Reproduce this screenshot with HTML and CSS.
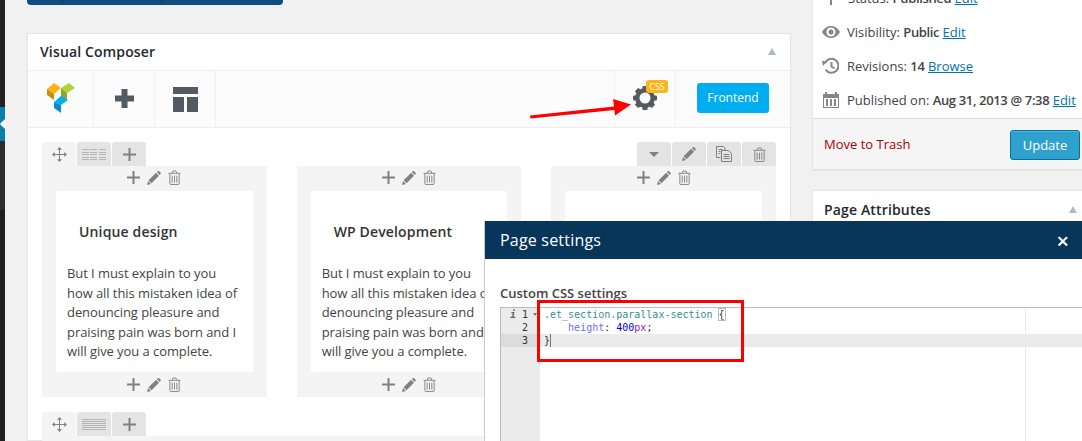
FILE: index.html
```html
<!DOCTYPE html>
<html lang="en">
<head>
<meta charset="utf-8">
<title>Visual Composer</title>
<link rel="stylesheet" href="styles.css">
</head>
<body>
<svg class="defs" width="0" height="0">
  <defs>
    <symbol id="i-plus" viewBox="0 0 13 13"><path d="M5.500 0h2v5.500H13v2H7.500V13h-2V7.500H0v-2h5.500z"/></symbol>
    <symbol id="i-pencil" viewBox="0 0 15 15"><path d="M10.600 1.200 11.900.1q.6-.3 1.100.1l1.600 1.600q.5.6 0 1.200l-1.100 1.300zM9.800 2l3 3-7.900 8-3.200-3zM1.200 10.800l3 3L0 15z"/></symbol>
    <symbol id="i-trash" viewBox="0 0 14 16"><path fill="none" stroke="currentColor" d="M2 4v10.500q0 1 1 1h8q1 0 1-1V4M.5 3.500h13M4.500 3.200 5.500 1h3l1 2.200M4.500 6v7.500M7 6v7.500M9.500 6v7.500"/></symbol>
    <symbol id="i-copy" viewBox="0 0 16 16"><path fill="none" stroke="currentColor" d="M4.500 11.500H.5V.5h7L9 2v2.500M2.500 3.500h4M2.500 5.500h2M2.500 7.500h2M5.500 4.500h7l3 3v8h-10zM7.500 8.500h6M7.500 10.500h6M7.500 12.500h6"/></symbol>
    <symbol id="i-move" viewBox="0 0 15 15"><path d="M7.500 0 10 2.700H8V7h4.300V5L15 7.500 12.300 10V8H8v4.300h2L7.500 15 5 12.300h2V8H2.700v2L0 7.500 2.700 5v2H7V2.700H5z"/></symbol>
  </defs>
</svg>

<div class="page">
  <aside class="adminbar"><div class="collapse"><span class="chev"></span></div></aside>

  <main class="main">
    <div class="topbar">
      <span class="topbar-seg topbar-a"></span><span class="topbar-seg topbar-b"></span><span class="topbar-seg topbar-c"></span>
    </div>

    <section class="box vc">
      <header class="box-head">
        <h2 class="box-title">Visual Composer</h2>
        <span class="fold"></span>
      </header>

      <nav class="vc-nav">
        <div class="nav-cell nav-logo">
          <svg class="logo" width="28" height="30" viewBox="0 0 28 30">
            <path fill="#fdb515" d="M0 6 7 0l7 5-7 6z"/>
            <path fill="#c98f0c" d="M0 6l7 5v6l-7-5z"/>
            <path fill="#b0d237" d="M14 5l8-5 6 5-8 5z"/>
            <path fill="#8aa62d" d="M14 5l6 5v6l-6 4z"/>
            <path fill="#00aeef" d="M7 19l7-6 7 4-7 5z"/>
            <path fill="#0a8cc4" d="M7 19l7 3v8l-7-5z"/>
          </svg>
        </div>
        <div class="nav-cell">
          <svg class="nav-plus" width="19" height="19" viewBox="0 0 19 19"><path d="M6.500 0h6v6.500H19v6h-6.500V19h-6v-6.500H0v-6h6.500z"/></svg>
        </div>
        <div class="nav-cell">
          <svg class="nav-layout" width="25" height="25" viewBox="0 0 25 25"><path d="M0 0h25v7H0zM0 10h11v15H0zM14 10h11v15H14z"/></svg>
        </div>
        <div class="nav-right">
          <div class="nav-cell nav-gear">
            <svg class="gear" width="24" height="24" viewBox="-12 -12 24 24">
              <circle r="7.700" fill="none" stroke="currentColor" stroke-width="4.400"/>
              <g>
                <rect x="-2.600" y="-12" width="5.200" height="4" rx="1"/>
                <rect x="-2.600" y="-12" width="5.200" height="4" rx="1" transform="rotate(45)"/>
                <rect x="-2.600" y="-12" width="5.200" height="4" rx="1" transform="rotate(90)"/>
                <rect x="-2.600" y="-12" width="5.200" height="4" rx="1" transform="rotate(135)"/>
                <rect x="-2.600" y="-12" width="5.200" height="4" rx="1" transform="rotate(180)"/>
                <rect x="-2.600" y="-12" width="5.200" height="4" rx="1" transform="rotate(225)"/>
                <rect x="-2.600" y="-12" width="5.200" height="4" rx="1" transform="rotate(270)"/>
                <rect x="-2.600" y="-12" width="5.200" height="4" rx="1" transform="rotate(315)"/>
              </g>
            </svg>
            <span class="badge">CSS</span>
          </div>
          <div class="nav-btn-wrap"><span class="frontend">Frontend</span></div>
        </div>
      </nav>

      <div class="vc-canvas">
        <div class="row-head">
          <div class="tabs">
            <span class="tab tab-move"><svg class="ic-move"><use href="#i-move"/></svg></span>
            <span class="tab"><span class="lines lines-cols"></span></span>
            <span class="tab"><svg class="ic-plus"><use href="#i-plus"/></svg></span>
          </div>
          <div class="tabs">
            <span class="tab"><span class="caret"></span></span>
            <span class="tab"><svg class="ic-pencil"><use href="#i-pencil"/></svg></span>
            <span class="tab"><svg class="ic-copy"><use href="#i-copy"/></svg></span>
            <span class="tab"><svg class="ic-trash"><use href="#i-trash"/></svg></span>
          </div>
        </div>

        <div class="columns">
          <article class="column">
            <div class="col-tools col-tools-top"><svg class="ic-plus"><use href="#i-plus"/></svg><svg class="ic-pencil"><use href="#i-pencil"/></svg><svg class="ic-trash"><use href="#i-trash"/></svg></div>
            <div class="card">
              <h3 class="card-title">Unique design</h3>
              <p class="card-text">But I must explain to you how all this mistaken idea of denouncing pleasure and praising pain was born and I will give you a complete.</p>
            </div>
            <div class="col-tools"><svg class="ic-plus"><use href="#i-plus"/></svg><svg class="ic-pencil"><use href="#i-pencil"/></svg><svg class="ic-trash"><use href="#i-trash"/></svg></div>
          </article>
          <article class="column">
            <div class="col-tools col-tools-top"><svg class="ic-plus"><use href="#i-plus"/></svg><svg class="ic-pencil"><use href="#i-pencil"/></svg><svg class="ic-trash"><use href="#i-trash"/></svg></div>
            <div class="card">
              <h3 class="card-title">WP Development</h3>
              <p class="card-text">But I must explain to you how all this mistaken idea of denouncing pleasure and praising pain was born and I will give you a complete.</p>
            </div>
            <div class="col-tools"><svg class="ic-plus"><use href="#i-plus"/></svg><svg class="ic-pencil"><use href="#i-pencil"/></svg><svg class="ic-trash"><use href="#i-trash"/></svg></div>
          </article>
          <article class="column">
            <div class="col-tools col-tools-top"><svg class="ic-plus"><use href="#i-plus"/></svg><svg class="ic-pencil"><use href="#i-pencil"/></svg><svg class="ic-trash"><use href="#i-trash"/></svg></div>
            <div class="card"></div>
            <div class="col-tools"></div>
          </article>
        </div>

        <div class="row-head row-head-2">
          <div class="tabs">
            <span class="tab tab-move"><svg class="ic-move"><use href="#i-move"/></svg></span>
            <span class="tab"><span class="lines"></span></span>
            <span class="tab"><svg class="ic-plus"><use href="#i-plus"/></svg></span>
          </div>
        </div>
        <div class="row-2-body"></div>
      </div>
    </section>
  </main>

  <aside class="side">
    <section class="box publish">
      <div class="pub-row pub-status"><svg class="pub-icon pub-pin" width="16" height="22" viewBox="0 0 16 22"><path fill="#82878c" d="M7 0h2v18H7z"/></svg><span>Status: <b>Published</b> <a>Edit</a></span></div>
      <div class="pub-row"><svg class="pub-icon" width="18" height="12" viewBox="0 0 18 12"><path fill="#82878c" fill-rule="evenodd" d="M9 0c4 0 7 2.500 9 6-2 3.500-5 6-9 6s-7-2.500-9-6c2-3.500 5-6 9-6zM9 1.500a4.500 4.500 0 1 0 0 9 4.500 4.500 0 0 0 0-9zM9 3.500a2.500 2.500 0 1 1 0 5 2.500 2.500 0 0 1 0-5z"/></svg><span>Visibility: <b>Public</b> <a>Edit</a></span></div>
      <div class="pub-row"><svg class="pub-icon pub-rev" width="17" height="16" viewBox="0 0 17 16"><path fill="none" stroke="#82878c" stroke-width="2" d="M3 5a7 7 0 1 1 .5 6.500M9.500 4v4.500l3 2"/><path fill="#82878c" d="M0 3l5 .5L1 8z"/></svg><span>Revisions: <b>14</b> <a>Browse</a></span></div>
      <div class="pub-row"><svg class="pub-icon pub-cal" width="16" height="16" viewBox="0 0 16 16"><path fill="#82878c" fill-rule="evenodd" d="M0 2h2V0h2v2h8V0h2v2h2v14H0zM1 6v9h14V6zM3 7h2v7H3zM7 7h2v7H7zM11 7h2v7h-2z"/></svg><span>Published on: <b>Aug 31, 2013 @ 7:38</b> <a>Edit</a></span></div>
      <footer class="pub-foot">
        <a class="trash">Move to Trash</a>
        <span class="update">Update</span>
      </footer>
    </section>
    <section class="box attrs">
      <header class="attrs-head">
        <h2 class="box-title">Page Attributes</h2>
        <span class="fold"></span>
      </header>
    </section>
  </aside>
</div>

<svg class="arrow" width="104" height="24" viewBox="0 0 104 24">
  <path fill="#f00" d="M0 19.500 84 10.500 83 3 101 8.500 85 19.500 84.500 14 .5 22.500z"/>
</svg>

<section class="modal">
  <header class="modal-head">
    <h2 class="modal-title">Page settings</h2>
    <span class="modal-close">×</span>
  </header>
  <div class="modal-body">
    <h3 class="field-label">Custom CSS settings</h3>
    <div class="editor">
      <div class="gutter">
        <div class="gline"><span class="info">i</span>1<span class="gfold"></span></div>
        <div class="gline">2</div>
        <div class="gline gline-active">3</div>
      </div>
      <div class="code">
        <div class="cline"><span class="c-sel">.et_section.parallax-section</span> <span class="c-brace">{</span></div>
        <div class="cline">    <span class="c-prop">height</span>: <span class="c-num">400</span><span class="c-unit">px</span>;</div>
        <div class="cline cline-active">}<span class="cursor"></span></div>
        <span class="margin-line"></span>
      </div>
    </div>
  </div>
</section>
<div class="redbox"></div>
</body>
</html>
```
FILE: styles.css
```css
* { box-sizing: border-box; }
html, body { margin: 0; padding: 0; height: 441px; overflow: hidden; }
body { position: relative; width: 1082px; background: #f1f1f1; color: #444; font-family: "Open Sans", "Noto Sans", sans-serif; font-size: 13px; }
.defs { position: absolute; }
svg { display: block; fill: currentColor; }
h2, h3, p { margin: 0; }

.page { display: flex; height: 441px; overflow: hidden; }
.adminbar { flex: 0 0 5px; height: 441px; background: linear-gradient(#222 0 107px, #0a7fae 107px 141px, #2d2d2d 141px 210px, #1f1f1f 210px); position: relative; }
.collapse { position: absolute; left: 0; top: 107px; width: 5px; height: 34px; overflow: hidden; }
.chev { position: absolute; left: 3px; top: 10px; width: 14px; height: 14px; border-left: 4px solid #fff; border-bottom: 4px solid #fff; transform: rotate(45deg); }

.main { flex: 0 0 764px; margin-left: 22px; }
.topbar { display: flex; width: 256px; height: 5px; }
.topbar-seg { background: #0f4c81; border-right: 1px solid #0a3d6b; }
.topbar-a { width: 36px; border-radius: 0 0 0 4px; }
.topbar-b { width: 99px; }
.topbar-c { width: 121px; border-right: 0; border-radius: 0 0 4px 0; }

.box { background: #fff; border: 1px solid #e5e5e5; box-shadow: 0 1px 1px rgba(0,0,0,.04); }
.vc { margin-top: 28px; height: 408px; }
.box-head { display: flex; justify-content: space-between; align-items: center; height: 36px; padding: 0 14px 2px 12px; }
.box-title { font-size: 14px; font-weight: 600; line-height: 19px; letter-spacing: .15px; color: #23282d; }
.fold { width: 0; height: 0; border-left: 4.500px solid transparent; border-right: 4.500px solid transparent; border-bottom: 7px solid #b4b9be; }

.vc-nav { display: flex; height: 58px; background: #fcfcfc; border-top: 1px solid #eee; border-bottom: 1px solid #eee; }
.nav-cell { display: flex; align-items: center; justify-content: center; width: 61px; border-right: 1px solid #f1f1f1; position: relative; color: #525a64; }
.nav-logo { width: 66px; }
.logo { margin: -3px 0 0 1px; }
.nav-plus { margin-top: -1px; }
.nav-right { display: flex; margin-left: auto; }
.nav-gear { border-left: 1px solid #f1f1f1; width: 62px; }
.gear { margin: -2px 0 0 -1px; }
.badge { position: absolute; left: 31px; top: 9px; width: 22px; height: 13px; border-radius: 3px; background: #fdb515; color: #fff; font-size: 9px; line-height: 13px; text-align: center; }
.nav-btn-wrap { width: 114px; padding: 12px 0 0 21px; }
.frontend { display: block; width: 72px; height: 30px; border-radius: 3px; background: #00aeef; color: #fff; font-size: 12px; line-height: 30px; text-align: center; }

.vc-canvas { padding: 14px 14px 0; }
.row-head { display: flex; justify-content: space-between; }
.row-head-2 { margin-top: 15px; }
.tabs { display: flex; gap: 1px; }
.tab { display: flex; align-items: center; justify-content: center; width: 34px; height: 24px; background: #e4e4e4; border-radius: 3px 3px 0 0; color: #808080; }
.tab-move { background: #f4f4f4; }
.columns { display: flex; gap: 30px; }
.column { flex: 1 1 0; height: 231px; background: #f4f4f4; padding: 0 14px; }
.col-tools { display: flex; justify-content: center; align-items: center; gap: 7px; height: 25px; color: #808080; }
.col-tools-top { padding-bottom: 2px; }
.card { height: 181px; background: #fff; border-radius: 2px; padding: 31px 11px 0; }
.card-title { font-size: 14px; font-weight: 600; line-height: 20px; letter-spacing: .15px; color: #333; padding-left: 12px; }
.card-text { margin-top: 22px; font-size: 13px; line-height: 19.500px; letter-spacing: -.07px; color: #444; }

.ic-plus { width: 13px; height: 13px; }
.ic-pencil { width: 14px; height: 14px; }
.ic-trash { width: 13px; height: 15px; }
.ic-copy { width: 16px; height: 16px; }
.ic-move { width: 15px; height: 15px; }
.lines { display: block; width: 24px; height: 11px; background: repeating-linear-gradient(#b5b5b5 0 1px, transparent 1px 2px); }
.lines-cols { background: linear-gradient(90deg, transparent 7px, #e4e4e4 7px 8.500px, transparent 8.500px 15.500px, #e4e4e4 15.500px 17px, transparent 17px), repeating-linear-gradient(#b5b5b5 0 1px, transparent 1px 2.500px); }
.caret { width: 0; height: 0; border-left: 5px solid transparent; border-right: 5px solid transparent; border-top: 5px solid #808080; }
.row-2-body { height: 5px; background: #f4f4f4; }

.side { flex: 0 0 290px; margin-left: 21px; }
.publish { margin-top: -29px; height: 199px; display: flex; flex-direction: column; }
.pub-row { display: flex; align-items: center; height: 34px; padding-left: 9px; font-size: 13px; color: #444; white-space: nowrap; }
.pub-status { height: 43px; padding-top: 9px; }
.pub-row b { font-weight: 600; letter-spacing: -.35px; }
.pub-row a { color: #0073aa; text-decoration: underline; }
.pub-icon { flex: none; margin-right: 7px; }
.pub-pin { margin: 0 9px 0 1px; }
.pub-cal { margin: 0 8px 0 1px; }
.pub-rev { margin: 0 8px 0 0; }
.pub-foot { display: flex; justify-content: space-between; align-items: center; margin-top: auto; height: 51px; background: #f5f5f5; border-top: 1px solid #ddd; padding: 0 0 0 11px; }
.trash { color: #a00; font-size: 13px; }
.update { display: block; width: 70px; height: 30px; margin-right: 21px; margin-top: 1px; border-radius: 3px; background: #2ea2cc; border: 1px solid #0074a2; color: #fff; text-align: center; line-height: 28px; font-size: 13px; box-shadow: inset 0 1px 0 rgba(120,200,230,.5); }
.attrs { margin-top: 20px; height: 120px; }
.attrs-head { display: flex; justify-content: space-between; align-items: center; height: 36px; padding: 0 24px 0 11px; }

.arrow { position: absolute; left: 530px; top: 96px; }

.modal { position: absolute; left: 484px; top: 221px; width: 598px; height: 220px; background: #fff; border-left: 1px solid #ccc; }
.modal-head { display: flex; justify-content: space-between; align-items: center; height: 38px; background: #08355a; color: #fff; padding: 0 13px 0 15px; }
.modal-title { font-size: 16px; font-weight: 400; letter-spacing: .2px; }
.modal-close { font-size: 22px; font-weight: 600; line-height: 1; }
.modal-body { padding: 25px 0 0 15px; }
.field-label { font-size: 13px; font-weight: 600; line-height: 18px; color: #444; }
.editor { display: flex; height: 134px; margin-top: 5px; border: 1px solid #bbb; border-width: 1px 0 0 1px; font-family: "DejaVu Sans Mono", monospace; font-size: 10px; line-height: 13px; color: #333; }
.gutter { flex: 0 0 39px; background: #ebebeb; color: #333; }
.gline { position: relative; height: 13px; padding-right: 12px; text-align: right; }
.gline-active { background: #dcdcdc; }
.info { position: absolute; left: 9px; font-style: italic; font-weight: 700; color: #666; }
.gfold { position: absolute; right: 3px; top: 5px; border-left: 2.500px solid transparent; border-right: 2.500px solid transparent; border-top: 3px solid #777; }
.code { position: relative; flex: 1; }
.cline { height: 13px; padding-left: 4px; color: #333; white-space: pre; }
.cline-active { background: #ebebeb; }
.c-sel { color: #378a9c; }
.c-brace { outline: 1px solid #bbb; }
.c-prop { color: #6c6cff; }
.c-num { color: #0000cd; }
.c-unit { color: #a0169a; }
.cursor { display: inline-block; width: 1px; height: 13px; background: #777; vertical-align: top; }
.margin-line { position: absolute; left: 485px; top: 0; bottom: 0; width: 1px; background: #e8e8e8; }

.redbox { position: absolute; left: 537px; top: 300px; width: 207px; height: 62px; border: 3px solid #f00; }
```
